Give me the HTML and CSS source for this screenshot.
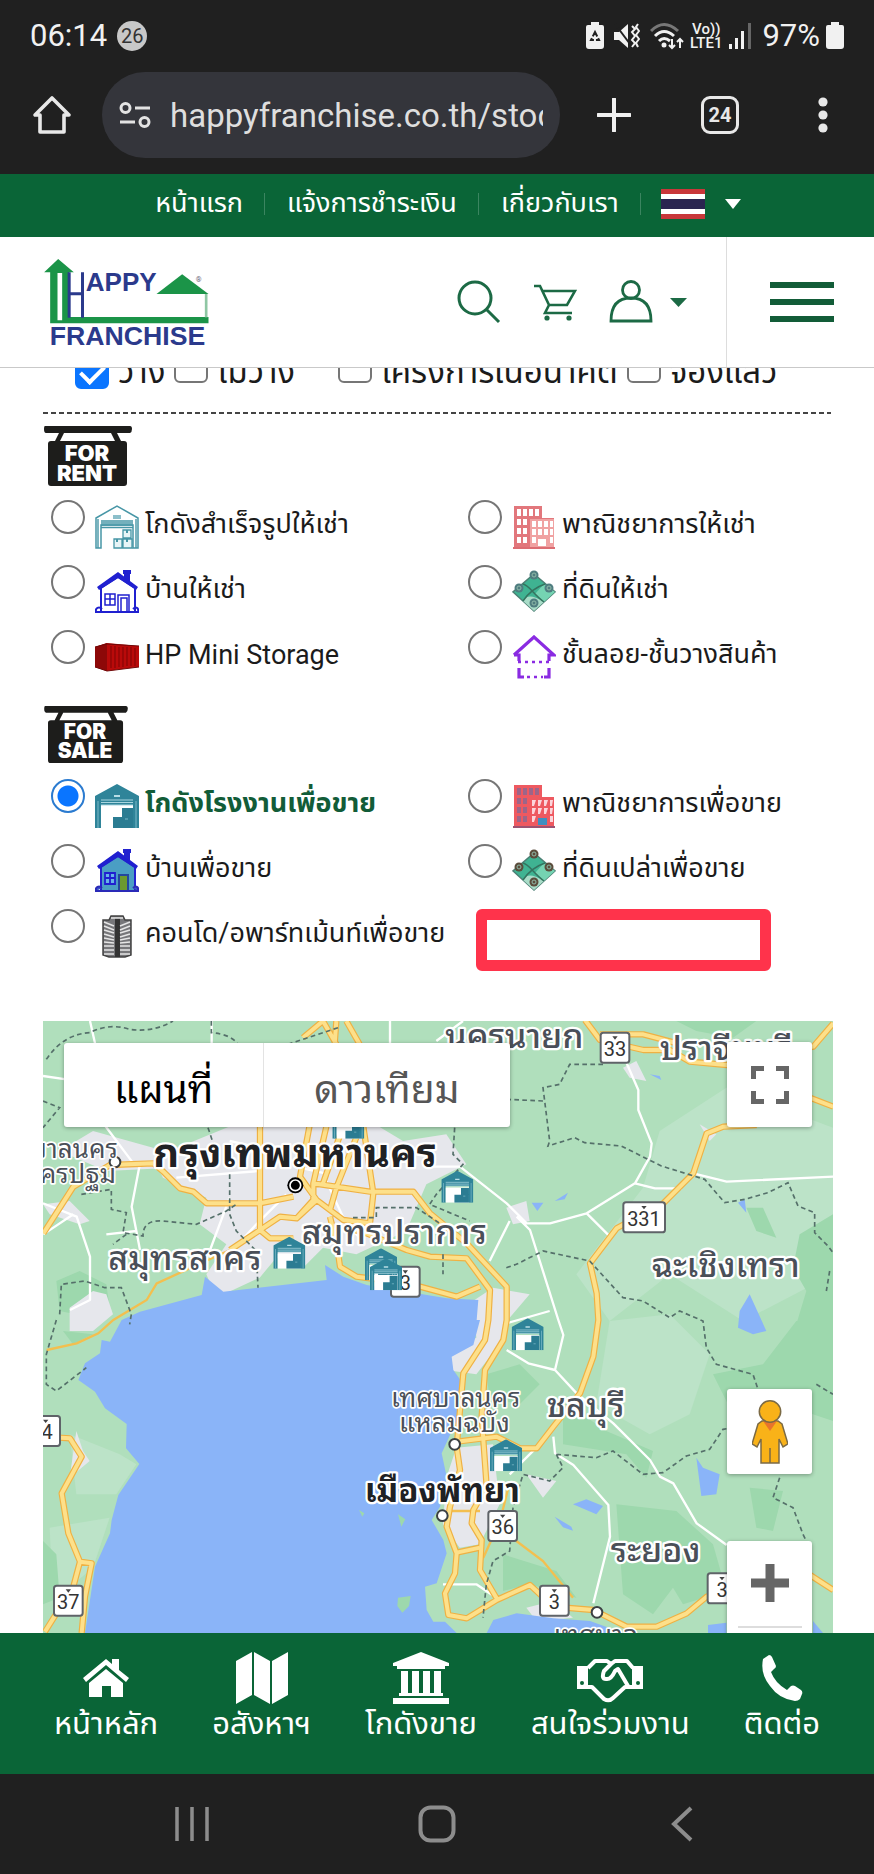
FILE: index.html
```html
<!DOCTYPE html>
<html lang="th">
<head>
<meta charset="utf-8">
<meta name="viewport" content="width=device-width, initial-scale=1">
<title>Happy Franchise</title>
<link rel="stylesheet" href="styles.css">
</head>
<body>
<svg class="defs" aria-hidden="true">
  <defs>
    <symbol id="warehouse" viewBox="0 0 44 44">
      <path d="M0 44V12L22 0l22 12v32h-6V21H6v23z" fill="#2f8499"/>
      <path d="M6 16h32M6 18.500h32M6 21h32" stroke="#a9d5df" stroke-width="1"/>
      <path d="M6 23h32v21H6z" fill="#fff"/>
      <path d="M18 44V33h9V24h11v20z" fill="#2b7c92"/>
      <path d="M19 11h6v2h-6z" fill="#b8dde5"/>
      <path d="M30 35h3M3 17v27M41 17v27" stroke="#7db9c8" stroke-width="1"/>
    </symbol>
    <symbol id="warehouse-line" viewBox="0 0 44 44">
      <path d="M1 43V13L22 1l21 12v30h-5V20H6v23z" fill="#fff" stroke="#4796a6" stroke-width="1.500"/>
      <path d="M3 14v29M41 14v29M6 16h32M6 18h32M6 20h32M6 22.500h32" stroke="#4796a6" stroke-width="1.400"/>
      <path d="M18 10h8v4h-8z" fill="#8cbfca"/>
      <path d="M19 34h8v9h-8zM28 34h9v9h-9zM28 25h8v8h-8z" fill="#e8f5f7" stroke="#4796a6" stroke-width="1.300"/>
      <path d="M22 34v3M32 34v3M32 25v3" stroke="#4796a6" stroke-width="2"/>
    </symbol>
    <symbol id="house-line" viewBox="0 0 44 44">
      <path d="M6 18v24h34V18L23 7z" fill="#fff" stroke="#2020d0" stroke-width="2"/>
      <path d="M2 17L23 2l20 15-2 3L23 8 4 20z" fill="#2020d0"/>
      <path d="M28 0h8v4h-1v8l-6-4V4h-1z" fill="#2020d0"/>
      <path d="M10 24h10v11H10zM15 24v11M10 29h10" fill="none" stroke="#2020d0" stroke-width="1.500"/>
      <path d="M23 43V25h11v18M26 42V28h6v14" fill="none" stroke="#2020d0" stroke-width="1.500"/>
      <path d="M1 42c-1-4 3-6 6-3M43 42c1-4-2-6-5-3M0 42h44" fill="none" stroke="#2020d0" stroke-width="2"/>
    </symbol>
    <symbol id="house-fill" viewBox="0 0 44 44">
      <path d="M6 18v24h34V18L23 7z" fill="#4a9ec4" stroke="#2323cf" stroke-width="2"/>
      <path d="M2 17L23 2l20 15-2 3L23 8 4 20z" fill="#1f1fd0"/>
      <path d="M28 0h8v4h-1v8l-6-4V4h-1z" fill="#2323cf"/>
      <path d="M10 24h10v11H10zM15 24v11M10 29h10" fill="#65b4e8" stroke="#1f1fd0" stroke-width="1.800"/>
      <path d="M24 42V26h9v16z" fill="#6c9a2f" stroke="#23479f" stroke-width="2"/>
      <path d="M1 42c-1-4 3-6 6-3M43 42c1-4-2-6-5-3M0 42h44" fill="#3b55c8" stroke="#2a2ab8" stroke-width="2"/>
    </symbol>
    <symbol id="container" viewBox="0 0 44 44">
      <path d="M0 12l12-4 32 3v21l-32 4-12-4z" fill="#b90a0a"/>
      <path d="M0 12l12-4v28L0 32z" fill="#8d0808"/>
      <path d="M16 11v22M20 11v22M24 12v20M28 12v20M32 12v19M36 12v19M40 13v18" stroke="#8f0707" stroke-width="1.400"/>
      <path d="M0 12l12-3 32 2M0 32l12 4 32-4" fill="none" stroke="#6f0909" stroke-width="1"/>
    </symbol>
    <symbol id="building-line" viewBox="0 0 44 44">
      <path d="M2 1h28v12h12v29H2z" fill="#e2777c"/>
      <path d="M18 14h24v28H18z" fill="#f0a2a2"/>
      <path d="M1 43h42" stroke="#dc6d73" stroke-width="2"/>
      <g fill="#fff"><path d="M5 4h4v7H5zM11 4h4v7h-4zM17 4h4v7h-4zM23 4h4v7h-4zM5 14h4v6H5zM11 14h4v6h-4zM5 23h4v6H5zM11 23h4v6h-4zM5 32h4v6H5zM11 32h4v6h-4z"/><path d="M20 16h4v6h-4zM26 16h4v6h-4zM32 16h4v6h-4zM38 16h3v6h-3zM20 24h4v6h-4zM26 24h4v6h-4zM32 24h4v6h-4zM38 24h3v6h-3zM20 32h4v6h-4zM38 32h3v6h-3zM26 34h8v7h-8z"/></g>
    </symbol>
    <symbol id="building-fill" viewBox="0 0 44 44">
      <path d="M2 1h28v12h12v29H2z" fill="#ee5960"/>
      <path d="M1 43h42" stroke="#9b5372" stroke-width="2"/>
      <g fill="#9c6589"><path d="M5 4h4v7H5zM11 4h4v7h-4zM17 4h4v7h-4zM23 4h4v7h-4zM5 14h4v6H5zM11 14h4v6h-4zM5 23h4v6H5zM11 23h4v6h-4zM5 32h4v6H5zM11 32h4v6h-4z"/></g>
      <path d="M20 16h4l-2 6h-2zM26 16h4l-2 6h-2zM32 16h4l-2 6h-2zM38 16h3l-1 6h-2zM20 24h4l-2 6h-2zM26 24h4l-2 6h-2zM32 24h4l-2 6h-2zM38 24h3l-1 6h-2zM20 32h4l-2 6h-2zM38 32h3v6h-3z" fill="#fbd5db"/>
      <path d="M26 34h9v7h-9z" fill="#3f8fc0"/>
    </symbol>
    <symbol id="land" viewBox="0 0 44 44">
      <path d="M22 4l21 18-21 19L1 22z" fill="#3fb392" stroke="#4c7f74" stroke-width="1.500"/>
      <path d="M32 14l11 8-11 10-9-8z" fill="#75d3b2"/>
      <path d="M22 41L11 31c4-6 9-6 21 1z" fill="#a9dcc8"/>
      <path d="M11 14c6 1 10 10 21 18M33 14c-9 3-16 8-22 17" fill="none" stroke="#35735f" stroke-width="1.500"/>
      <g fill="currentColor"><circle cx="22" cy="5" r="4.500"/><circle cx="7" cy="18" r="4.500"/><circle cx="37" cy="18" r="4.500"/><circle cx="22" cy="33" r="4.500"/></g>
      <g fill="none" stroke="#8fb9a8" stroke-width="1"><circle cx="22" cy="5" r="2"/><circle cx="7" cy="18" r="2"/><circle cx="37" cy="18" r="2"/><circle cx="22" cy="33" r="2"/></g>
    </symbol>
    <symbol id="mezzanine" viewBox="0 0 44 44">
      <path d="M2 20L22 2l20 18h-5v6M7 26v-6H2M7 33v9h5M37 33v9h-5" fill="none" stroke="#8a2be2" stroke-width="3.200"/>
      <path d="M6 27h32M15 42h16" stroke="#8a2be2" stroke-width="2.600" stroke-dasharray="3 4"/>
    </symbol>
    <symbol id="tower" viewBox="0 0 44 44">
      <path d="M8 6h6l2-4h12l2 4h6v35l-6 2H14l-6-2z" fill="#77777a" stroke="#444" stroke-width="1.500"/>
      <path d="M20 4h5v39h-5z" fill="#333"/>
      <path d="M9 8l10 4M9 12l10 4M9 16l10 3M9 20l10 3M9 24l10 2M9 28l10 1M9 32h10M9 36h10M9 40h10M35 8l-10 4M35 12l-10 4M35 16l-10 3M35 20l-10 3M35 24l-10 2M35 28l-10 1M35 32H25M35 36H25M35 40H25M16 4h12" stroke="#e6e6e6" stroke-width="1.500"/>
    </symbol>
    <g id="roads">
      <path d="M1 637L91 497l110-65 130-5 30 25 50 50 40 10 40 35h160l100-20M651 317v310l30 25h70M801 307l-30 160 50 70-60 55-50-5-150 100M850 317l-39 170v50l-50 55M811 487l170 25h130l50 65 110 90 120 130v100l-10 60-55 90-10 140 15 210-40 70-5 40 30 50-5 90 50 85M961 317l30 200-10 90-80-10-80-60M900 317l-60 170M941 347l-60 150-20 70M861 587l20 80 10 70 50 30 80 10 110 20 110 30 70-30M901 617l70 20 120 50 70 20 110 5 70 95-5 90-10 60-65 100-20 220 10 70-30 110-10 60 30 80-5 60-30 60 10 65 55 10 90-55 100-45 70 65 120 10 100 50 90 0 90-40 60-50 110-40 200-25 70 45"/>
      <path d="M1241 1262l120-15 70 35h50l50-65 80-100 40-110 15-110-5-80-20-90 80-105 140-75 90-90 40-120 50-20 100-5M2280 222l91 35M1626-3l45 60 130 30h80l60 35 110 10 260-55 60-70M1671 40l130 0 150 40M780 50l60-50 40 70M880 0l-5 70M910 0l40 70M0 1247l81 5 35 55-60 110 20 120 35 85-20 75-85 135M111 1622l35 5-20 100-10 109M1241 1595l70-15"/>
    </g>
  </defs>
</svg>

<header class="device">
  <div class="status">
    <span class="clock">06:14</span>
    <span class="count">26</span>
    <div class="status-right">
      <svg width="18" height="27" viewBox="0 0 18 27"><path d="M5 0h8v3h3q2 0 2 2v19q0 3-3 3H3q-3 0-3-3V5q0-2 2-2h3z" fill="#f1f1f1"/><path d="M9 10l4 8H5z" fill="none" stroke="#202020" stroke-width="2" stroke-dasharray="5 2"/></svg>
      <svg class="mute" width="26" height="28" viewBox="0 0 26 28"><path d="M0 10h5l9-8v24l-9-8H0z" fill="#f1f1f1"/><path d="M1 2l15 20" stroke="#202020" stroke-width="2"/><path d="M18 4l3 3-3 3 3 4-3 4 3 3-3 4M24 2l-2 3 3 4-3 4 3 4-3 4 2 4" fill="none" stroke="#f1f1f1" stroke-width="2"/></svg>
      <svg width="34" height="28" viewBox="0 0 34 28"><g fill="none" stroke-width="3"><path d="M1 9q13-13 27 0" stroke="#777"/><path d="M5 14q9-9 19 0M9 19q5-5 11 0" stroke="#f1f1f1"/></g><circle cx="14" cy="23" r="2.500" fill="#f1f1f1"/><path d="M22 17v9m-3-3l3 3 3-3M30 26v-9m-3 3l3-3 3 3" fill="none" stroke="#f1f1f1" stroke-width="2"/></svg>
      <span class="lte"><span>Vo))</span><span>LTE1</span></span>
      <svg width="24" height="26" viewBox="0 0 24 26"><path d="M1 21h3v5H1zM7 15h3v11H7zM13 8h3v18h-3z" fill="#f1f1f1"/><path d="M20 0h3v26h-3z" fill="#666"/></svg>
      <span class="percent">97%</span>
      <svg width="18" height="27" viewBox="0 0 18 27"><path d="M5 0h8v3h3q2 0 2 2v19q0 3-3 3H3q-3 0-3-3V5q0-2 2-2h3z" fill="#f1f1f1"/></svg>
    </div>
  </div>
  <div class="browser">
    <button class="plain" aria-label="Home"><svg width="40" height="40" viewBox="0 0 40 40"><path d="M20 3L3 20h5v17h24V20h5z" fill="none" stroke="#e8e8e8" stroke-width="3.600" stroke-linejoin="round"/></svg></button>
    <div class="pill">
      <svg width="32" height="28" viewBox="0 0 32 28" fill="none" stroke="#e3e3e3" stroke-width="3"><circle cx="6.500" cy="7" r="4.500"/><path d="M16 7h15M1 21h15"/><circle cx="25.500" cy="21" r="4.500"/></svg>
      <input class="url" type="text" aria-label="Address" value="happyfranchise.co.th/stock">
    </div>
    <div class="tools">
      <button class="plain" aria-label="New tab"><svg width="34" height="34" viewBox="0 0 34 34"><path d="M17 1v32M1 17h32" stroke="#f0f0f0" stroke-width="4" stroke-linecap="round"/></svg></button>
      <button class="tabs" aria-label="Tabs">24</button>
      <button class="plain more" aria-label="More"><svg width="10" height="36" viewBox="0 0 10 36" fill="#e8e8e8"><circle cx="5" cy="5" r="4.600"/><circle cx="5" cy="18" r="4.600"/><circle cx="5" cy="31" r="4.600"/></svg></button>
    </div>
  </div>
</header>

<nav class="topbar">
  <a href="#">หน้าแรก</a>
  <a href="#">แจ้งการชำระเงิน</a>
  <a href="#">เกี่ยวกับเรา</a>
  <button class="lang" aria-label="ภาษา">
    <svg width="44" height="30" viewBox="0 0 44 30"><path d="M0 0h44v30H0z" fill="#c8373a"/><path d="M0 5h44v20H0z" fill="#fff"/><path d="M0 10h44v10H0z" fill="#2a2550"/></svg>
    <svg width="16" height="10" viewBox="0 0 16 10"><path d="M0 0h16L8 10z" fill="#fff"/></svg>
  </button>
</nav>

<div class="sitehead">
  <a class="logo" href="#" aria-label="Happy Franchise">
    <svg width="167" height="90" viewBox="130 80 500 270">
      <path d="M133 126l42-40 47 40h-14v134h418v19H151V126zM173 128v142h14V128z" fill="#1b9448" fill-rule="evenodd"/>
      <path d="M470 191l77-59 79 59z" fill="#1b9448"/>
      <path d="M619 191v70" stroke="#8fc7a4" stroke-width="8"/>
      <path d="M208 126v136M248 126v136M208 190h40" stroke="#2b3a8c" stroke-width="9"/>
      <text x="258" y="181" class="logo-top">APPY</text>
      <text x="150" y="345" class="logo-bottom">FRANCHISE</text>
      <text x="588" y="154" class="logo-reg">®</text>
    </svg>
  </a>
  <div class="actions">
    <button class="plain" aria-label="ค้นหา"><svg width="44" height="44" viewBox="0 0 44 44" fill="none" stroke="#1c6a45" stroke-width="3"><circle cx="18" cy="18" r="16"/><path d="M29 29l13 13"/></svg></button>
    <button class="plain" aria-label="ตะกร้า"><svg width="44" height="44" viewBox="0 0 44 44" fill="none" stroke="#1c6a45" stroke-width="2.600"><path d="M1 6h6l9 19-4 8h27M10 11h32l-8 14H16"/><circle cx="14" cy="38" r="2.600" fill="#1c6a45" stroke="none"/><circle cx="36" cy="38" r="2.600" fill="#1c6a45" stroke="none"/></svg></button>
    <button class="plain user" aria-label="บัญชี"><svg width="44" height="44" viewBox="0 0 44 44" fill="none" stroke="#1c6a45" stroke-width="2.800"><circle cx="22" cy="10" r="8.500"/><path d="M2 41q0-23 20-23t20 23z"/></svg><svg class="caret" width="17" height="9" viewBox="0 0 17 9"><path d="M0 0h17L8.500 9z" fill="#1c6a45"/></svg></button>
  </div>
  <button class="menu" aria-label="เมนู"><svg width="64" height="42" viewBox="0 0 64 42"><path d="M0 4h64M0 21h64M0 38h64" stroke="#125c38" stroke-width="6"/></svg></button>
</div>

<main>
  <div class="status-filter">
    <label><input type="checkbox" checked>ว่าง</label>
    <label><input type="checkbox">ไม่ว่าง</label>
    <label class="far"><input type="checkbox">โครงการในอนาคต</label>
    <label><input type="checkbox">จองแล้ว</label>
  </div>
  <div class="rule"></div>

  <svg class="sign" width="88" height="60" viewBox="0 0 88 60" role="img" aria-label="For rent"><path d="M2 0h84q2 0 2 3t-2 4H73l4 8h3q3 0 3 3v39q0 3-3 3H7q-3 0-3-3V18q0-3 3-3h4l4-8H2Q0 7 0 3t2-3zM20 7l-4 8h55l-4-8z" fill="#1d1d1b" fill-rule="evenodd"/><text x="43" y="35" class="sign-text">FOR</text><text x="43" y="55" class="sign-text">RENT</text></svg>
  <div class="options">
    <label><input type="radio" name="kind"><svg class="ico"><use href="#warehouse-line"/></svg>โกดังสำเร็จรูปให้เช่า</label>
    <label><input type="radio" name="kind"><svg class="ico"><use href="#building-line"/></svg>พาณิชยาการให้เช่า</label>
    <label><input type="radio" name="kind"><svg class="ico"><use href="#house-line"/></svg>บ้านให้เช่า</label>
    <label><input type="radio" name="kind"><svg class="ico land-rent"><use href="#land"/></svg>ที่ดินให้เช่า</label>
    <label><input type="radio" name="kind"><svg class="ico"><use href="#container"/></svg>HP Mini Storage</label>
    <label><input type="radio" name="kind"><svg class="ico"><use href="#mezzanine"/></svg>ชั้นลอย-ชั้นวางสินค้า</label>
  </div>

  <svg class="sign sale" width="84" height="57" viewBox="0 0 88 60" role="img" aria-label="For sale"><path d="M2 0h84q2 0 2 3t-2 4H73l4 8h3q3 0 3 3v39q0 3-3 3H7q-3 0-3-3V18q0-3 3-3h4l4-8H2Q0 7 0 3t2-3zM20 7l-4 8h55l-4-8z" fill="#1d1d1b" fill-rule="evenodd"/><text x="43" y="35" class="sign-text">FOR</text><text x="43" y="55" class="sign-text">SALE</text></svg>
  <div class="options">
    <label class="picked"><input type="radio" name="kind" checked><svg class="ico"><use href="#warehouse"/></svg>โกดังโรงงานเพื่อขาย</label>
    <label><input type="radio" name="kind"><svg class="ico"><use href="#building-fill"/></svg>พาณิชยาการเพื่อขาย</label>
    <label><input type="radio" name="kind"><svg class="ico"><use href="#house-fill"/></svg>บ้านเพื่อขาย</label>
    <label><input type="radio" name="kind"><svg class="ico land-sale"><use href="#land"/></svg>ที่ดินเปล่าเพื่อขาย</label>
    <label><input type="radio" name="kind"><svg class="ico"><use href="#tower"/></svg>คอนโด/อพาร์ทเม้นท์เพื่อขาย</label>
    <div class="frame"></div>
  </div>

  <section class="map" aria-label="แผนที่">
    <svg class="canvas" viewBox="0 0 2370 1836" preserveAspectRatio="xMidYMin slice">
      <path d="M0 0h2370v1836H0z" fill="#b0dfbc"/>
      <g fill="#bce3c8">
        <path d="M1850 330L2050 200 2370 320V760L2100 900 1880 760 1700 900 1600 760 1800 500z"/>
        <path d="M1700 900l180-20 120 120-60 180-120 60-160-90z"/>
        <path d="M80 1240l150 60 50 30-60 90-120 0zM20 1520l180-30-50 150-120 100z"/>
      </g>
      <g fill="#9dd8ad">
        <path d="M1900 0h240l-70 50-110-20zM2270 640l100-60v330h-110l30-100-40-70z"/>
        <path d="M2010 1060l150-30 100-130h110v300l-90-30-60 50-150-40zM1560 1140l130 90 140 60-20 80-60-70-190-30zM1330 1060l100-30 60 60-60 60-90-20z"/>
        <path d="M1720 1450l180 20 110 100 40 140-130 40-30-50-60 80-90-60zM2120 1400l100 10-30 120-50-10zM1380 1600l160 50 60 80-140-40-80 20zM2110 560l30 70 60 20-40-90z"/>
        <path d="M40 780l70-30 80 40 10 70-50 30-100-20zM0 1560l40 40 10 130-50 20zM60 930l90 10-60 30z"/>
      </g>
      <g fill="#e6e7ec">
        <path d="M600 300h380l100 60 130-20 60 90-120 60-60 140-150 70-100-20-60 60-80-30-50 60-130 60-30-70 60-90-80-60 20-80-130-60-30-60z"/>
        <path d="M150 330l180 50 60 60-200 10-140-60zM0 550l80-10 60 60-30 10-90-30zM80 860l70-50 40 10 20 60-60 50-70 0z"/>
        <path d="M1290 840l60-40 110 20-60 70-30 80-70 90-70-10-10-60 80-40zM1240 1280l110-10 20 180-60 120-60 10-50-70 10-140zM1390 560l60-20 10 60-50 10zM1740 140l40-20 30 60-50-10zM1450 1360l90 20-40 50zM1600 1280l-30-40M1450 1760l80-20 60 50-110 10zM1970 310l50 30-20 20zM100 1230l20 60 20 30-60 50z"/>
      </g>
      <path fill="#8ab4f8" d="M126 1836L156 1637 201 1537 206 1497 226 1422 289 1329 249 1282 251 1209 186 1162 156 1112 106 1077 126 1027 171 997 176 957 201 962 236 897 291 872 476 822 486 767 541 812 851 777 846 732 901 767 971 792 1211 832 1306 837 1301 897 1311 897 1291 972 1226 1007 1231 1047 1256 1082 1246 1187 1196 1297 1211 1367 1191 1457 1166 1497 1201 1557 1211 1597 1181 1687 1146 1697 1151 1767 1171 1802 1206 1802 1241 1836z"/>
      <path fill="#8ab4f8" d="M1331 1836l20-39 70-20 110 15 110 8 100 36zM1995 1836v-24l55-7v31zM2310 1800l30 36h-30zM1960 1310l20 30 50 20-10 60-45 5zM1590 1450l40-15 50 20-20 25zM1535 1487l50 30 5 12-30-10zM2090 870l30-50 50 110-40 10-45-20zM2085 545l20-10 5 40zM1466 545h35l-18 25zM1535 540l40-25-10 20zM1820 160l30 5 5 12z"/>
      <g fill="#9dd8ad"><path d="M1065 1730l38-5-5 30-20 20-15-20zM1065 1480l22 15-12 22zM948 1467l16 10-6 10z"/></g>

      <g class="road-white">
        <path d="M141 0l15 67-5 200 120 160M506 0v70M1041 0v70M0 165l70 10M1180 60l80-60M291 427l-25 130 25 130M0 547l101 40 40 120v130l-60 30M1 640l90-60M190 640l90-10M500 690l60-160M520 740l120-130 90-90M560 360l90 20M400 470l250-20M850 480l60 130 50 50M700 380l70 60 90 20"/>
        <path d="M1751 127l35 80v60l40 100-5 40-45 80-145 90-110 30h-70l-60-60-140-110h-90M1951 457l100 25 320-15M1776 487l60 15h80M1421 587l40 40 85 270 15 45-25 105 65 70 110 90 110 110 30 50 40 20 70 120 90 65M1536 1047l-80-20-65-40M1531 1247l5 50 55 35 105 120 5 95-50 200M1400 1360l80-80M1631 577l70 70M1400 600l-60 120M1200 1690h100l60 40M1380 910l140-40"/>
      </g>
      <g class="road-minor"><path d="M561 687L341 787l-30 50-100 60-45 40-65 30-90 20M1401 1380l-30 120-50 110M1420 1560l80 60 90 110M1221 1470h90"/></g>
      <use href="#roads" class="road-case"/>
      <use href="#roads" class="road-fill"/>
      <g class="border">
        <path d="M10 115Q60 40 140 35q60-30 120-10 70 10 130-25M505 0v35q60 5 80 35M0 240l50 20-50 60M115 520l90-15v60l45 10-10 60 60 10q0-50 60-45l100 10 90-40 30-20M495 320l30 90M560 460v120l20 50 60 60 5 110M250 640l-40 30M50 880l5-90 70-10 60 20 50 0 30 80-5 30M40 897L10 1000v90l30 20 90-70M735 70l150-50"/>
        <path d="M1390 235l110 5M1680 130l-100 0-30 60-50 10 20 160-5 15 80-25 30 15 110 10 120 60 130 40 60 70 60-10 70-20 60-30 30 70 50 20v60l40 40 30 40M1235 320l-5 80 30 30-80 90-20 30 120 50M1390 740l30-10 80-40 140 30 100 110 60 10 80 50 30-20 70 30 10 80 30 50 110 30 20 60M1540 1300l120 10 50-20 90 70 60-5 70-50 70-20 40-60 60-10M1540 1300l20 40-40 40-80-20-30 100-10 130-50 30-20 70-10 100M2210 1370l-20 60 60 30 30 80 10 20M2320 1090l50 30M2360 750l-10 60M1200 700v60M930 590h70v-30h120l90 60"/>
      </g>

      <g class="shield"><rect x="1673" y="35" width="86" height="90" rx="8"/><rect x="1741" y="544" width="125" height="90" rx="8"/><rect x="1044" y="737" width="86" height="90" rx="8"/><rect x="-35" y="1185" width="86" height="90" rx="8"/><rect x="33" y="1694" width="86" height="90" rx="8"/><rect x="1336" y="1470" width="86" height="90" rx="8"/><rect x="1491" y="1694" width="86" height="90" rx="8"/><rect x="1994" y="1657" width="86" height="90" rx="8"/></g>
      <path fill="#444" d="M1708 46h16l-8 10zM1795 555h16l-8 10zM1079 748h16l-8 10zM0 1196h16l-8 10zM68 1705h16l-8 10zM1371 1481h16l-8 10zM1526 1705h16l-8 10zM2029 1668h16l-8 10z"/>
      <g class="route"><text x="1716" y="105">33</text><text x="1803" y="614">331</text><text x="1087" y="807">3</text><text x="12" y="1255">4</text><text x="76" y="1764">37</text><text x="1379" y="1540">36</text><text x="1534" y="1764">3</text><text x="2037" y="1727">3</text></g>

      <g class="town-dot"><circle cx="216" cy="423" r="16"/><circle cx="1235" cy="1270" r="16"/><circle cx="1198" cy="1484" r="16"/><circle cx="1662" cy="1774" r="16"/></g>
      <circle cx="757" cy="493" r="24"/><circle cx="757" cy="493" r="16" fill="none" stroke="#fff" stroke-width="5"/>

      <g class="label province">
        <text x="1414" y="82">นครนายก</text><text x="2048" y="117">ปราจีนบุรี</text><text x="426" y="747">สมุทรสาคร</text><text x="1054" y="670">สมุทรปราการ</text><text x="2048" y="767">ฉะเชิงเทรา</text><text x="1628" y="1187">ชลบุรี</text><text x="1838" y="1622">ระยอง</text>
      </g>
      <g class="label city"><text x="756" y="439">กรุงเทพมหานคร</text></g>
      <g class="label city small"><text x="1198" y="1442">เมืองพัทยา</text></g>
      <g class="label town"><text x="30" y="412">เทศบาลนคร</text><text x="80" y="487">นครปฐม</text><text x="1238" y="1159">เทศบาลนคร</text><text x="1234" y="1232">แหลมฉบัง</text><text x="1658" y="1870">เทศบาล</text></g>

      <g><use href="#warehouse" x="868" y="257" width="96" height="96"/><use href="#warehouse" x="691" y="647" width="96" height="96"/><use href="#warehouse" x="966" y="682" width="96" height="96"/><use href="#warehouse" x="981" y="712" width="96" height="96"/><use href="#warehouse" x="1195" y="449" width="96" height="96"/><use href="#warehouse" x="1406" y="892" width="96" height="96"/><use href="#warehouse" x="1341" y="1255" width="96" height="96"/></g>
    </svg>
    <div class="maptype"><button class="on">แผนที่</button><button>ดาวเทียม</button></div>
    <button class="ctl full" aria-label="เต็มหน้าจอ"><svg width="38" height="38" viewBox="0 0 38 38" fill="none" stroke="#666" stroke-width="5"><path d="M2.500 13V2.500H13M25 2.500h10.500V13M35.500 25v10.500H25M13 35.500H2.500V25"/></svg></button>
    <div class="controls">
      <button class="ctl" aria-label="สตรีทวิว"><svg width="36" height="64" viewBox="0 0 36 64" stroke="#7b6a45" stroke-width="1.500"><path d="M10 21h16l4 3 6 20-5 3-4-8v24h-9V48v15H9V39l-4 8-5-3 6-20z" fill="#f9b218"/><path d="M11 21h14l-7 10z" fill="#e8742c" stroke="none"/><circle cx="18" cy="11.500" r="10.700" fill="#f9b218"/></svg></button>
      <button class="ctl zoom" aria-label="ซูมเข้า"><svg width="38" height="38" viewBox="0 0 38 38"><path d="M19 0v38M0 19h38" stroke="#666" stroke-width="9"/></svg></button>
    </div>
  </section>
</main>

<nav class="bottombar">
  <a href="#"><svg width="52" height="52" viewBox="0 0 52 52" fill="#fff"><path d="M3 26L26 7l6 5V7h7v11l10 8-3 4-20-17L6 30z"/><path d="M9 31l17-14 17 14v14H31V34h-9v11H9z"/></svg>หน้าหลัก</a>
  <a href="#"><svg width="52" height="52" viewBox="0 0 52 52" fill="#fff"><path d="M0 9L16 0v43L0 52zM18 0l16 9v43l-16-9zM36 9l16-9v43l-16 9z"/></svg>อสังหาฯ</a>
  <a href="#"><svg width="56" height="52" viewBox="0 0 56 52" fill="#fff"><path d="M28 0l28 11v3h-4v3H4v-3H0v-3zM8 19h7v22h4V19h7v22h4V19h7v22h4V19h7v22h2v3H6v-3h2zM0 46h56v6H0z"/></svg>โกดังขาย</a>
  <a href="#"><svg width="66" height="52" viewBox="0 0 66 52" fill="none" stroke="#fff" stroke-width="4" stroke-linejoin="round"><path d="M0 14h11v23H0zM55 14h11v23H55z" fill="#fff" stroke="none"/><path d="M11 16l7-7h12l4 3 4-3h12l6 7M11 35h4l12 12q5 3 9-1l12-11h7M35 11l-8 8q-3 8 2 8 5 1 9-8l3-2 10 17"/><g fill="#0a6537" stroke="none"><circle cx="5" cy="31" r="2"/><circle cx="61" cy="31" r="2"/></g></svg>สนใจร่วมงาน</a>
  <a href="#"><svg width="42" height="52" viewBox="0 0 42 52" fill="#fff"><path d="M2 7l6-4q2 0 3 2l4 9q0 2-2 3l-3 3q4 11 16 18l4-4q2-1 4 0l6 4q2 2 1 4l-2 5q-2 2-5 2Q18 47 9 34-1 22 2 7z"/></svg>ติดต่อ</a>
</nav>

<footer class="sysnav">
  <button class="plain" aria-label="Recents"><svg width="34" height="36" viewBox="0 0 34 36"><path d="M2 1v34M17 1v34M32 1v34" stroke="#8d8d8d" stroke-width="3.500"/></svg></button>
  <button class="plain" aria-label="Home"><svg width="38" height="38" viewBox="0 0 38 38"><rect x="2.500" y="2.500" width="33" height="33" rx="10" fill="none" stroke="#8d8d8d" stroke-width="4"/></svg></button>
  <button class="plain" aria-label="Back"><svg width="34" height="36" viewBox="0 0 34 36"><path d="M26 2L9 18l17 16" fill="none" stroke="#8d8d8d" stroke-width="4"/></svg></button>
</footer>
</body>
</html>
```

FILE: styles.css
```css
* { box-sizing: border-box; }
body {
  margin: 0;
  min-height: 100vh;
  display: flex;
  flex-direction: column;
  background: #fff;
  color: #1b1b1b;
  font-family: Roboto, "Noto Sans Thai", "Noto Sans", sans-serif;
  font-size: 27px;
}
button, input { font-family: inherit; }
button { border: 0; padding: 0; cursor: pointer; }
svg { display: block; flex: none; }
a { color: inherit; text-decoration: none; }
.defs { position: absolute; width: 0; height: 0; }
.plain { background: none; }

.device { background: #202020; color: #f1f1f1; padding-bottom: 15px; }
.status { display: flex; align-items: center; gap: 10px; height: 71px; padding: 0 30px; }
.clock, .percent { font-size: 31px; }
.count {
  width: 30px; height: 30px; border-radius: 50%;
  background: #c8c8c8; color: #333;
  font-size: 20px; line-height: 30px; text-align: center;
}
.status-right { margin-left: auto; display: flex; align-items: center; gap: 6px; }
.mute { margin: 0 4px; }
.status-right .percent { margin-left: 4px; }
.lte { display: flex; flex-direction: column; align-items: center; font-size: 15px; line-height: 14px; font-weight: 500; }
.browser { display: flex; align-items: center; gap: 30px; height: 88px; padding: 0 46px 0 32px; }
.pill {
  flex: 0 1 458px; height: 86px; border-radius: 43px;
  background: #34353b;
  display: flex; align-items: center; gap: 19px; padding: 0 17px;
}
.url { width: 100%; min-width: 0; border: 0; padding: 0; background: none; color: #dedede; font-size: 33px; }
.tools { flex: 1; display: flex; align-items: center; gap: 70px; padding-left: 7px; }
.tabs {
  width: 38px; height: 38px; border: 3px solid #e8e8e8; border-radius: 9px;
  background: none; color: #e8e8e8; font-size: 20px; font-weight: 700;
}
.more { margin-left: auto; }

.topbar {
  display: flex; align-items: center; justify-content: center;
  height: 63px; padding-bottom: 4px; background: #0a6537; color: #fff; font-size: 27px;
}
.topbar a { padding: 0 22px; line-height: 1; position: relative; }
.topbar a::after { content: ""; position: absolute; right: 0; top: 3px; width: 1px; height: 22px; background: #3b8560; }
.lang { display: flex; align-items: center; gap: 20px; background: none; margin-left: 20px; }

.sitehead { display: flex; align-items: center; height: 131px; border-bottom: 1px solid #c9c9c9; padding-left: 43px; }
.logo-top, .logo-bottom { font-family: "Liberation Sans", sans-serif; font-weight: 700; fill: #2b3a8c; font-size: 78px; }
.logo-bottom { font-size: 80px; }
.logo-reg { font-size: 22px; fill: #667; }
.actions { margin-left: auto; display: flex; align-items: center; gap: 32px; padding-right: 39px; }
.user { display: flex; align-items: center; gap: 17px; }
.menu { align-self: stretch; background: none; border-left: 1px solid #ddd; padding: 0 40px 0 43px; }

main { flex: 1; display: flex; flex-direction: column; padding: 0 41px 0 43px; }
.status-filter { display: flex; align-items: flex-end; height: 24px; overflow: hidden; padding-left: 32px; gap: 9px; font-size: 33px; }
.status-filter label { display: flex; align-items: baseline; gap: 9px; white-space: nowrap; line-height: 40px; }
.status-filter .far { margin-left: 34px; }
input[type="checkbox"], input[type="radio"] { appearance: none; margin: 0; flex: none; width: 34px; height: 34px; border: 2px solid #767676; background: #fff; }
input[type="checkbox"] { border-radius: 6px; }
input[type="checkbox"]:checked { display: inline-grid; place-items: center; border-color: #0a75ff; background: #0a75ff; }
input[type="checkbox"]:checked::after { content: ""; width: 11px; height: 19px; border: solid #fff; border-width: 0 4px 4px 0; rotate: 45deg; }
input[type="radio"] { border-radius: 50%; align-self: flex-start; }
input[type="radio"]:checked { border-color: #2b7bd0; background: radial-gradient(circle, #0a75ff 10px, #fff 11px); }
.rule { height: 2px; margin: 20px 2px 12px 0; background: repeating-linear-gradient(90deg, #444 0 5px, transparent 5px 8px); }

.sign { margin-left: 1px; margin-bottom: 14px; }
.sign.sale { margin-top: 27px; margin-bottom: 16px; }
.sign-text { font-family: Inter, sans-serif; font-weight: 900; font-size: 22px; fill: #fff; text-anchor: middle; }
.options { display: grid; grid-template-columns: 8fr 7fr; row-gap: 16px; padding-left: 8px; }
.options label { display: flex; align-items: center; height: 49px; white-space: nowrap; }
.ico { width: 44px; height: 44px; margin: 0 6px 0 10px; align-self: flex-end; }
.land-rent { color: #4f7d80; }
.land-sale { color: #5b4d3c; }
.picked { color: #125c38; font-weight: 700; }
.frame { width: 295px; max-width: 100%; height: 62px; margin-left: 8px; border: 11px solid #ff334b; border-radius: 6px; }

.map { position: relative; flex: 1; min-height: 612px; margin-top: 50px; overflow: hidden; }
.canvas { position: absolute; inset: 0; width: 100%; height: 100%; }
.road-white { fill: none; stroke: #fff; stroke-width: 7; stroke-linejoin: round; }
.road-minor { fill: none; stroke: #f3bf4f; stroke-width: 7; }
.road-case { fill: none; stroke: #efb143; stroke-width: 19; stroke-linejoin: round; }
.road-fill { fill: none; stroke: #fde08a; stroke-width: 12; stroke-linejoin: round; }
.border { fill: none; stroke: #55706a; stroke-width: 5; stroke-dasharray: 14 10; }
.shield { fill: #fff; stroke: #5f6368; stroke-width: 6; }
.route { font-family: Roboto, sans-serif; font-size: 60px; fill: #333; text-anchor: middle; }
.town-dot { fill: #fff; stroke: #3c4043; stroke-width: 6; }
.label { font-family: "Noto Sans Thai Looped", Loma, "Noto Sans Thai", "Noto Sans", sans-serif; text-anchor: middle; stroke: #fff; stroke-width: 14; stroke-linejoin: round; paint-order: stroke; fill: #4a4f58; }
.province { font-size: 102px; font-weight: 500; }
.city { font-size: 120px; font-weight: 700; fill: #202124; }
.city.small { font-size: 99px; }
.town { font-size: 78px; stroke-width: 10; }

.maptype { position: absolute; left: 21px; top: 22px; display: flex; height: 84px; box-shadow: 0 1px 4px #0005; border-radius: 3px; background: #fff; }
.maptype button { background: none; font-family: "Noto Sans Thai Looped", Loma, "Noto Sans Thai", "Noto Sans", sans-serif; font-size: 39px; color: #565656; padding: 0 50px; }
.maptype .on { color: #000; border-right: 1px solid #e3e3e3; }
.ctl { display: grid; place-items: center; width: 85px; height: 85px; background: #fff; border-radius: 3px; box-shadow: 0 1px 4px #0005; }
.full { position: absolute; right: 21px; top: 21px; }
.controls { position: absolute; right: 21px; bottom: -77px; display: grid; gap: 67px; }
.zoom { height: 169px; align-items: start; padding-top: 23px; background: linear-gradient(#ddd, #ddd) center 85px / 64px 2px no-repeat #fff; }

.bottombar { display: flex; justify-content: space-evenly; height: 141px; padding-top: 19px; background: #0a6537; color: #fff; font-size: 31px; }
.bottombar a { display: flex; flex-direction: column; align-items: center; line-height: 40px; white-space: nowrap; }
.sysnav { display: grid; grid-template-columns: repeat(3, 1fr); width: 100%; height: 100px; padding: 0 70px; background: #202020; align-items: center; justify-items: center; }
```
